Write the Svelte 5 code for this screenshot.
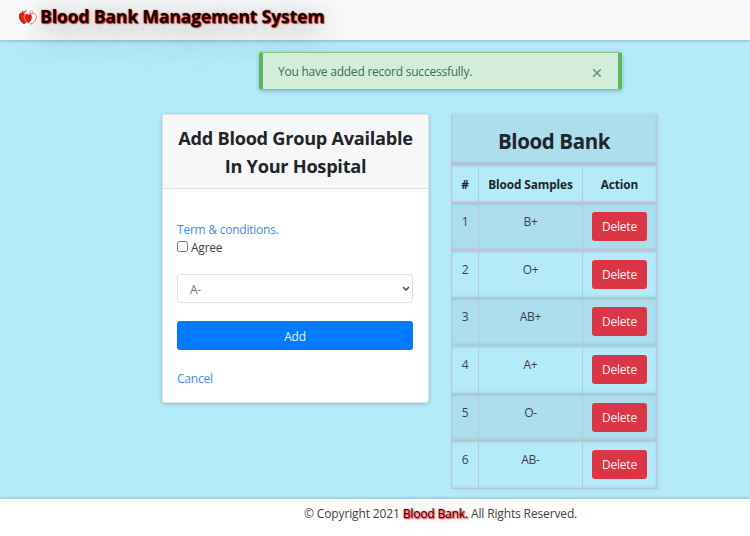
<script>
  let visible = $state(true);
  let agreed = $state(false);
  let samples = $state(['B+', 'O+', 'AB+', 'A+', 'O-', 'AB-']);
</script>

<div class="page">
  <header>
    <svg class="logo" viewBox="0 0 20 18" aria-hidden="true">
      <path d="M6.600 5.500C3.600 3.200.8 4.800.8 8c0 3.400 2.300 6.800 5.200 8.200 1.400-.7 2.400-1.600 3.200-2.700z" fill="#dc2010" />
      <path d="M5.400 5 4 2.600M5.600 4.800l3-2.400" stroke="#e12c1c" stroke-width="1.100" fill="none" />
      <path d="M12.500 6.300c2.600-2.100 6-.5 6 2.500 0 2.900-2.400 5.700-5.600 7.400l-1.700-1.300" fill="#fff" stroke="#e34b3d" stroke-width=".8" />
      <path d="M10.700 6.700C8.800 4.500 6 6.100 6.200 9.200c.2 2.700 2 4.700 4.300 6.300 2.300-1.900 3.600-3.700 3.700-6.200.1-3-1.900-4.500-3.500-2.600z" fill="#d9200c" stroke="#fff" stroke-width=".6" />
      <path d="M11 6.500c.2-1.800 1.200-3.500 2.800-3.700 1.500-.1 1.300 1.800 0 2.200-1 .2-1.800.3-2.800 1.500z" fill="#fff" stroke="#e5594d" stroke-width=".7" />
    </svg>
    <span class="brand">Blood Bank Management System</span>
  </header>

  <main>
    {#if visible}
      <div class="alert" role="alert">
        <span class="message">You have added record successfully.</span>
        <button class="close" aria-label="Close" onclick={() => (visible = false)}>
          <svg viewBox="0 0 10 10"><path d="m1.200 1.200 7.600 7.600m0-7.600L1.200 8.800" /></svg>
        </button>
      </div>
    {/if}

    <div class="columns">
      <section class="card">
        <h1>Add Blood Group Available<br />In Your Hospital</h1>
        <form onsubmit={(e) => e.preventDefault()}>
          <a class="terms" href="#terms">Term &amp; conditions.</a>
          <label><input type="checkbox" bind:checked={agreed} /><span>Agree</span></label>
          <div class="select">
            <select aria-label="Blood group">
              <option>A-</option><option>A+</option><option>B-</option><option>B+</option>
              <option>AB-</option><option>AB+</option><option>O-</option><option>O+</option>
            </select>
            <svg viewBox="0 0 8 5"><path d="m1 1 3 3 3-3" /></svg>
          </div>
          <button class="add">Add</button>
          <a class="cancel" href="#cancel">Cancel</a>
        </form>
      </section>

      <section class="bank">
        <div class="row title"><h2>Blood Bank</h2></div>
        <div class="row head"><span>#</span><span>Blood Samples</span><span>Action</span></div>
        {#each samples as sample, i}
          <div class="row" class:odd={i % 2 === 0}>
            <span>{i + 1}</span><span>{sample}</span><span class="cell"><button class="delete">Delete</button></span>
          </div>
        {/each}
      </section>
    </div>
  </main>

  <footer><span class="copy">© Copyright 2021 <b>Blood Bank.</b> All Rights Reserved.</span></footer>
</div>

<style>
  :global(body) { margin: 0; }
  .page, .page * { box-sizing: border-box; }
  .page {
    display: flex;
    flex-direction: column;
    width: 750px;
    height: 536px;
    overflow: hidden;
    background: #b5eafa;
    color: #3b4247;
    font: 12px/18px "Open Sans", "Noto Sans", sans-serif;
    letter-spacing: -.23px;
  }
  button, select { font: inherit; letter-spacing: inherit; margin: 0; }
  a { color: #3a8ff5; text-decoration: none; }
  header {
    display: flex;
    flex: none;
    height: 40px;
    padding: 7px 0 0 18px;
    background: #f8f9fa;
    box-shadow: 0 1px 3px rgba(0, 0, 0, .22);
  }
  .logo { position: relative; width: 20px; height: 18px; margin: 1px 2px 0 0; border-radius: 50%; background: #fffc; box-shadow: 0 0 3px #fff; }
  .brand {
    height: 20px;
    font-size: 17.5px;
    line-height: 19px;
    font-weight: 700;
    letter-spacing: -.12px;
    white-space: nowrap;
    color: #090405;
    text-shadow: 1px 1px 1px #f00, 0 0 2px rgba(255, 0, 0, .55), 0 5px 26px rgba(0, 0, 0, .3), 0 10px 44px rgba(0, 0, 0, .35);
  }
  main { flex: none; height: 459px; padding-top: 12px; }
  .alert {
    position: relative;
    display: flex;
    align-items: center;
    justify-content: space-between;
    width: 363px;
    height: 38px;
    margin-left: 259px;
    padding: 0 15.5px 0 15px;
    border: 1px solid #80c987;
    border-width: 1px 4px;
    border-left-color: #5cb860;
    border-right-color: #5cb860;
    border-radius: 3px;
    background: #d4edda;
    color: #37724a;
    box-shadow: 0 1px 4px rgba(0, 0, 0, .25);
  }
  .message { padding-top: 1px; }
  .close { display: flex; padding: 3px 1px 0 0; border: 0; background: none; }
  .close svg { width: 10px; height: 10px; fill: none; stroke: #69976f; stroke-width: 1.6; }
  .columns { display: flex; align-items: flex-start; gap: 22px; padding: 24px 0 0 162px; }
  .card {
    width: 267px;
    height: 289px;
    border: 1px solid #dfe3e4;
    border-radius: 3px;
    background: #fff;
    box-shadow: 0 1px 4px rgba(0, 0, 0, .2);
  }
  h1 {
    height: 74px;
    margin: 0;
    padding-top: 9px;
    border-bottom: 1px solid #dfdfdf;
    background: #f7f7f7;
    color: #212529;
    font-size: 18.2px;
    line-height: 28px;
    letter-spacing: -.28px;
    text-align: center;
    white-space: nowrap;
  }
  form { display: flex; flex-direction: column; align-items: flex-start; padding: 32px 15px 0 14px; }
  label { display: flex; align-items: center; height: 18px; }
  input { width: 11px; height: 11px; margin: -4px 3px 0 0; }
  .select { position: relative; width: 100%; margin-top: 17px; }
  select {
    display: block;
    width: 100%;
    height: 29px;
    padding: 2px 12px 0;
    appearance: none;
    border: 1px solid #dfe2e5;
    border-radius: 3px;
    background: #fff;
    color: #6c757d;
  }
  .select svg { position: absolute; right: 3px; top: 12px; width: 8px; height: 5px; fill: none; stroke: #454b50; stroke-width: 1.5; }
  .add { width: 100%; height: 29px; margin-top: 18px; padding: 2px 0 0; border: 0; border-radius: 3px; background: #007bff; color: #e5f2ff; }
  .cancel { margin-top: 20px; }
  .bank { width: 206px; border: solid #b9c8cd; border-width: 0 1px; box-shadow: 1px 0 3px rgba(0, 0, 0, .1); }
  .row {
    display: grid;
    grid-template-columns: 27px 104px 73px;
    height: 47.67px;
    border-bottom: 1px solid #bcc3c6;
    box-shadow: inset 0 2px 3px -1px rgba(0, 0, 0, .13), inset 0 -2px 3px -1px rgba(0, 0, 0, .08);
    text-align: center;
  }
  .row > span { padding-top: 10px; border-right: 1px solid #b9c8cd; }
  .row > span:last-child { border-right: 0; }
  .row.odd, .row.title { background: #acdeed; }
  .row.title { display: block; height: 51px; box-shadow: inset 0 -2px 3px -1px rgba(0, 0, 0, .15); }
  .row.head { height: 38px; color: #212529; font-size: 11.8px; font-weight: 700; letter-spacing: -.1px; }
  .row.head > span { padding-top: 10px; }
  h2 { margin: 0; padding-top: 12px; color: #212529; font-size: 20.5px; line-height: 30px; letter-spacing: -.4px; }
  .row > .cell { padding: 9px 0 0 9px; text-align: left; }
  .delete { display: block; width: 55px; height: 29px; padding: 1px 0 0; border: 0; border-radius: 3px; background: #dc3545; color: #fff0f1; text-align: center; }
  footer { flex: none; height: 37px; padding: 6px 0 0 304px; background: #fff; box-shadow: 0 -1px 3px rgba(0, 0, 0, .2); white-space: nowrap; }
  .copy { letter-spacing: -.14px; }
  b { font-weight: 400; color: #2a0808; text-shadow: 1px 1px 1.5px #f00, 0 0 2px rgba(255, 0, 0, .5), 0 0 24px rgba(0, 0, 0, .25), 0 0 40px rgba(0, 0, 0, .25); }
</style>
